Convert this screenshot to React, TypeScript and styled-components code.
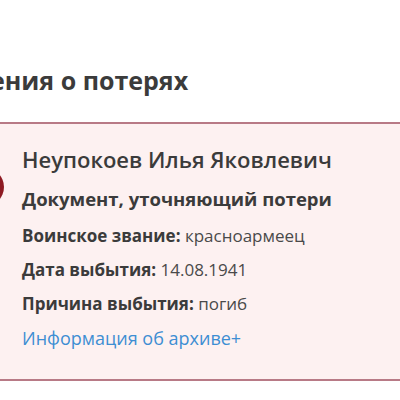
import React from "react";
import styled, { createGlobalStyle } from "styled-components";

const Global = createGlobalStyle`
  html, body { margin: 0; padding: 0; background: #ffffff; overflow: hidden; }
  body { font-family: "Open Sans", "Liberation Sans", sans-serif; color: #3a3a3a; }
`;

const Page = styled.div`
  width: 400px;
  height: 400px;
  overflow: hidden;
  padding-top: 64px;
  box-sizing: border-box;
`;

const Title = styled.h2`
  margin: 0 0 0 -73px;
  font-size: 25px;
  line-height: 32px;
  font-weight: 700;
  color: #3b3b3b;
  white-space: nowrap;
`;

const Card = styled.div`
  position: relative;
  margin: 26px -20px 0 -40px;
  padding: 20px 20px 28px 62px;
  background: #fdf1f1;
  border-top: 2px solid #b87a86;
  border-bottom: 2px solid #b87a86;
  display: flex;
  flex-direction: column;
`;

const Marker = styled.div`
  position: absolute;
  left: 6px;
  top: 44px;
  width: 38px;
  height: 38px;
  border-radius: 50%;
  background: #8e1a22;
`;

const Name = styled.div`
  font-size: 22px;
  line-height: 30px;
  font-weight: 600;
  color: #3b3b3b;
  white-space: nowrap;
`;

const DocType = styled.div`
  margin: 12px 0 3px;
  font-size: 18.5px;
  line-height: 26px;
  font-weight: 700;
  color: #3b3b3b;
  white-space: nowrap;
`;

const Row = styled.div`
  margin-top: 8px;
  font-size: 17px;
  line-height: 26px;
  color: #4a4a4a;
  white-space: nowrap;
`;

const Label = styled.span`
  font-weight: 700;
  color: #3b3b3b;
`;

const Link = styled.a`
  margin-top: 8px;
  font-size: 18px;
  line-height: 26px;
  color: #3d8ed3;
  text-decoration: none;
  white-space: nowrap;
`;

export default function App() {
  return (
    <>
      <Global />
      <Page>
        <Title>Сведения о потерях</Title>
        <Card>
          <Marker />
          <Name>Неупокоев Илья Яковлевич</Name>
          <DocType>Документ, уточняющий потери</DocType>
          <Row>
            <Label>Воинское звание:</Label> красноармеец
          </Row>
          <Row>
            <Label>Дата выбытия:</Label> 14.08.1941
          </Row>
          <Row>
            <Label>Причина выбытия:</Label> погиб
          </Row>
          <Link href="#">Информация об архиве+</Link>
        </Card>
      </Page>
    </>
  );
}
